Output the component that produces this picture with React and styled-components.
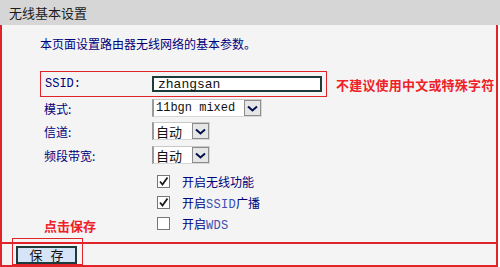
import styled, { createGlobalStyle } from "styled-components";

const GlobalStyle = createGlobalStyle`
  html, body {
    margin: 0;
    padding: 0;
    background: #ffffff;
  }
  body {
    font-family: "Noto Sans CJK SC", "Noto Sans", sans-serif;
    font-size: 12px;
  }
`;

const Page = styled.div`
  width: 500px;
  height: 267px;
  overflow: hidden;
`;

const Header = styled.div`
  height: 25px;
  background: #d6d6d6;
  display: flex;
  align-items: center;
  padding-left: 9px;
  font-size: 13px;
  color: #1c1c1c;
`;

const Panel = styled.div`
  width: 494px;
  background: #f4f4f4;
  border: 2px solid #e0242a;
  border-top: none;
`;

const Main = styled.div`
  position: relative;
  height: 217px;
  box-sizing: border-box;
  padding: 10px 0 0 38px;
`;

const Intro = styled.div`
  height: 18px;
  line-height: 18px;
  color: #00007a;
  margin-bottom: 18px;
`;

const SsidLine = styled.div`
  display: flex;
  align-items: center;
  gap: 9px;
`;

const Highlight = styled.div`
  width: 285px;
  height: 24px;
  border: 1px solid #e0242a;
  display: grid;
  grid-template-columns: 111px 1fr;
  align-items: center;
`;

const Hint = styled.span`
  color: #ee2128;
  font-weight: bold;
  font-size: 13px;
  letter-spacing: 0.2px;
`;

const Row = styled.div`
  display: grid;
  grid-template-columns: 112px 1fr;
  align-items: center;
  height: ${(p) => p.h || 23}px;
`;

const Label = styled.span`
  color: #00007a;
  padding-left: 4px;
  font-family: ${(p) => (p.mono ? '"Liberation Mono", monospace' : "inherit")};
`;

const TextInput = styled.div`
  width: 162px;
  height: 12px;
  border: 2px solid #1c3b3a;
  background: #ffffff;
  display: flex;
  align-items: center;
  padding-left: 4px;
  font-family: "Liberation Mono", monospace;
  font-size: 13px;
  color: #111;
`;

const Select = styled.div`
  display: flex;
  width: ${(p) => p.w}px;
  height: 18px;
  box-sizing: border-box;
  background: #ffffff;
  border-left: 2px solid #9a9a9a;
  border-top: 1px solid #c8c8c8;
  border-right: 1px solid #d8d8d8;
  border-bottom: 1px solid #d8d8d8;
`;

const SelectText = styled.div`
  flex: 1;
  display: flex;
  align-items: center;
  padding-left: 2px;
  color: #111;
  font-family: ${(p) =>
    p.mono ? '"Liberation Mono", monospace' : '"Noto Sans CJK SC", sans-serif'};
  font-size: ${(p) => (p.mono ? 12 : 13)}px;
`;

const SelectBtn = styled.div`
  width: 17px;
  box-sizing: border-box;
  border: 1px solid #8c8c8c;
  background: #e6e6e6;
  display: flex;
  align-items: center;
  justify-content: center;
`;

const CheckList = styled.div`
  margin-top: 4px;
  padding-left: 117px;
`;

const CheckRow = styled.div`
  display: flex;
  align-items: center;
  height: 21px;
  gap: 12px;
  color: #00007a;
`;

const Box = styled.div`
  width: 11px;
  height: 11px;
  border: 1px solid #777;
  background: #ffffff;
  display: flex;
  align-items: center;
  justify-content: center;
`;

const Mono = styled.span`
  font-family: "Liberation Mono", monospace;
  font-size: 12px;
  letter-spacing: 0.3px;
  color: #3a4fb0;
`;

const SaveNote = styled.span`
  position: absolute;
  left: 42px;
  top: 191px;
  color: #ee2128;
  font-weight: bold;
  font-size: 13px;
`;

const Footer = styled.div`
  position: relative;
  height: 21px;
  border-top: 2px solid #e0242a;
  padding-left: 14px;
  display: flex;
  align-items: center;
`;

const SaveFrame = styled.div`
  position: absolute;
  left: 10px;
  top: -6px;
  width: 69px;
  height: 25px;
  border: 1px solid #e0242a;
`;

const SaveButton = styled.button`
  position: relative;
  width: 61px;
  height: 18px;
  margin: 0;
  padding: 0;
  border: 2px solid #1c3b3a;
  background: #d6e4f8;
  font-family: "Noto Sans CJK SC", sans-serif;
  font-size: 13px;
  color: #111;
  letter-spacing: 8px;
  text-indent: 8px;
  line-height: 14px;
`;

const Chevron = () => (
  <svg width="11" height="7" viewBox="0 0 11 7">
    <path d="M1 1.5 L5.5 5.5 L10 1.5" fill="none" stroke="#00104a" strokeWidth="2" />
  </svg>
);

const Tick = () => (
  <svg width="11" height="11" viewBox="0 0 11 11">
    <path d="M2 5.5 L4.5 8.5 L9.5 1.5" fill="none" stroke="#1a1a1a" strokeWidth="1.8" />
  </svg>
);

const Dropdown = ({ w, mono, children }) => (
  <Select w={w}>
    <SelectText mono={mono}>{children}</SelectText>
    <SelectBtn>
      <Chevron />
    </SelectBtn>
  </Select>
);

const checks = [
  { on: true, label: "开启无线功能" },
  { on: true, label: "开启", mono: "SSID", tail: "广播" },
  { on: false, label: "开启", mono: "WDS" },
];

export default function App() {
  return (
    <Page>
      <GlobalStyle />
      <Header>无线基本设置</Header>
      <Panel>
        <Main>
          <Intro>本页面设置路由器无线网络的基本参数。</Intro>
          <SsidLine>
            <Highlight>
              <Label mono>SSID:</Label>
              <TextInput>zhangsan</TextInput>
            </Highlight>
            <Hint>不建议使用中文或特殊字符</Hint>
          </SsidLine>
          <Row h={22}>
            <Label>模式:</Label>
            <Dropdown w={110} mono>
              11bgn mixed
            </Dropdown>
          </Row>
          <Row h={24}>
            <Label>信道:</Label>
            <Dropdown w={58}>自动</Dropdown>
          </Row>
          <Row h={24}>
            <Label>频段带宽:</Label>
            <Dropdown w={58}>自动</Dropdown>
          </Row>
          <CheckList>
            {checks.map((c, i) => (
              <CheckRow key={i}>
                <Box>{c.on && <Tick />}</Box>
                <span>
                  {c.label}
                  {c.mono && <Mono>{c.mono}</Mono>}
                  {c.tail}
                </span>
              </CheckRow>
            ))}
          </CheckList>
          <SaveNote>点击保存</SaveNote>
        </Main>
        <Footer>
          <SaveFrame />
          <SaveButton>保存</SaveButton>
        </Footer>
      </Panel>
    </Page>
  );
}
